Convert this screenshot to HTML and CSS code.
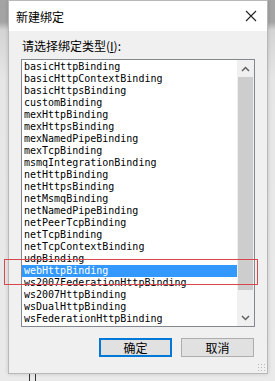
FILE: index.html
```html
<!DOCTYPE html>
<html lang="zh-CN">
<head>
  <meta charset="UTF-8" />
  <title>新建绑定</title>
  <link rel="stylesheet" href="styles.css">
</head>
<body>

  <div class="dialog">
    <div class="titlebar">
      <span class="title">新建绑定</span>
      <svg class="close" width="12" height="12" viewBox="0 0 12 12">
        <path d="M1 1 L11 11 M11 1 L1 11" stroke="#222" stroke-width="1.1" fill="none"/>
      </svg>
    </div>

    <div class="content">
      <div class="label">请选择绑定类型(<u>I</u>):</div>

      <div class="listbox">
        <ul class="items" id="items"></ul>
        <div class="scrollbar">
          <div class="arrow">
            <svg width="9" height="6" viewBox="0 0 9 6"><path d="M1 5 L4.5 1.5 L8 5" stroke="#606060" stroke-width="1.5" fill="none"/></svg>
          </div>
          <div class="track">
            <div class="thumb"></div>
          </div>
          <div class="arrow">
            <svg width="9" height="6" viewBox="0 0 9 6"><path d="M1 1 L4.5 4.5 L8 1" stroke="#606060" stroke-width="1.5" fill="none"/></svg>
          </div>
        </div>
      </div>

      <div class="buttons">
        <button class="btn btn-default">确定</button>
        <button class="btn">取消</button>
      </div>
    </div>

    <div class="grip"></div>
  </div>

  <div class="behind"></div>

  <!-- marca roja sobre la opción elegida -->
  <div class="highlight"></div>

  <script>
    const bindings = [
      'basicHttpBinding', 'basicHttpContextBinding', 'basicHttpsBinding', 'customBinding',
      'mexHttpBinding', 'mexHttpsBinding', 'mexNamedPipeBinding', 'mexTcpBinding',
      'msmqIntegrationBinding', 'netHttpBinding', 'netHttpsBinding', 'netMsmqBinding',
      'netNamedPipeBinding', 'netPeerTcpBinding', 'netTcpBinding', 'netTcpContextBinding',
      'udpBinding', 'webHttpBinding', 'ws2007FederationHttpBinding', 'ws2007HttpBinding',
      'wsDualHttpBinding', 'wsFederationHttpBinding'
    ];

    const lista = document.getElementById('items');
    bindings.forEach(nombre => {
      const li = document.createElement('li');
      li.textContent = nombre;
      if (nombre === 'webHttpBinding') li.className = 'selected';
      lista.appendChild(li);
    });
  </script>
</body>
</html>
```

FILE: styles.css
```css
body {
  margin: 0;
  width: 275px;
  height: 381px;
  overflow: hidden;
  position: relative;
  font-family: "Noto Sans CJK SC", "Noto Sans", sans-serif;
  background: linear-gradient(to bottom, #a4a4a4 0, #a4a4a4 22px, #d4d4d4 30px, #e6e6e6 80px, #eaeaea 100%);
}

.dialog {
  margin-left: 8px;
  width: 258px;
  height: 372px;
  border: 1px solid #b8b8b8;
  background-color: #f0f0f0;
  box-shadow: 0 0 4px rgba(0,0,0,0.15);
  position: relative;
}

.titlebar {
  height: 30px;
  background-color: #fff;
  display: flex;
  align-items: center;
  justify-content: space-between;
  padding: 0 10px 0 7px;
}

.title {
  font-size: 12px;
  color: #000;
}

.content {
  padding: 7px 12px 0 12px;
}

.label {
  font-size: 12px;
  color: #000;
  padding-left: 1px;
  height: 16px;
  line-height: 16px;
  margin-bottom: 5px;
}

.label u {
  text-decoration-thickness: 1px;
}

.listbox {
  width: 232px;
  height: 266px;
  border: 1px solid #828790;
  background-color: #fff;
  display: flex;
}

.items {
  list-style: none;
  margin: 0;
  padding: 1px 0 0 0;
  flex: 1;
  overflow: hidden;
  font-family: "DejaVu Sans Mono", "Liberation Mono", monospace;
  font-size: 10px;
  color: #000;
}

.items li {
  height: 12px;
  line-height: 12px;
  padding-left: 2px;
  white-space: nowrap;
}

.items li.selected {
  background-color: #3399ff;
  color: #fff;
}

.scrollbar {
  width: 17px;
  background-color: #f0f0f0;
  display: flex;
  flex-direction: column;
}

.arrow {
  height: 17px;
  display: flex;
  align-items: center;
  justify-content: center;
}

.track {
  flex: 1;
}

.thumb {
  margin: 0 1px;
  height: 213px;
  background-color: #cdcdcd;
}

.buttons {
  display: flex;
  justify-content: flex-end;
  gap: 9px;
  margin-top: 11px;
  padding-right: 1px;
}

.btn {
  width: 73px;
  height: 19px;
  padding: 0;
  font-family: "Noto Sans CJK SC", sans-serif;
  font-size: 12px;
  line-height: 15px;
  color: #000;
  background-color: #e1e1e1;
  border: 1px solid #adadad;
}

.btn-default {
  border: 2px solid #0078d7;
}

.grip {
  position: absolute;
  right: 2px;
  bottom: 2px;
  width: 8px;
  height: 8px;
  background-image: radial-gradient(circle, #b8b8b8 0.8px, transparent 1px);
  background-size: 3px 3px;
}

.behind {
  margin-left: 29px;
  width: 5px;
  height: 8px;
  border-left: 1px solid #333;
  border-right: 1px solid #333;
}

.highlight {
  position: absolute;
  left: 4px;
  top: 259px;
  width: 252px;
  height: 24px;
  border: 1px solid #d9464c;
}
```
